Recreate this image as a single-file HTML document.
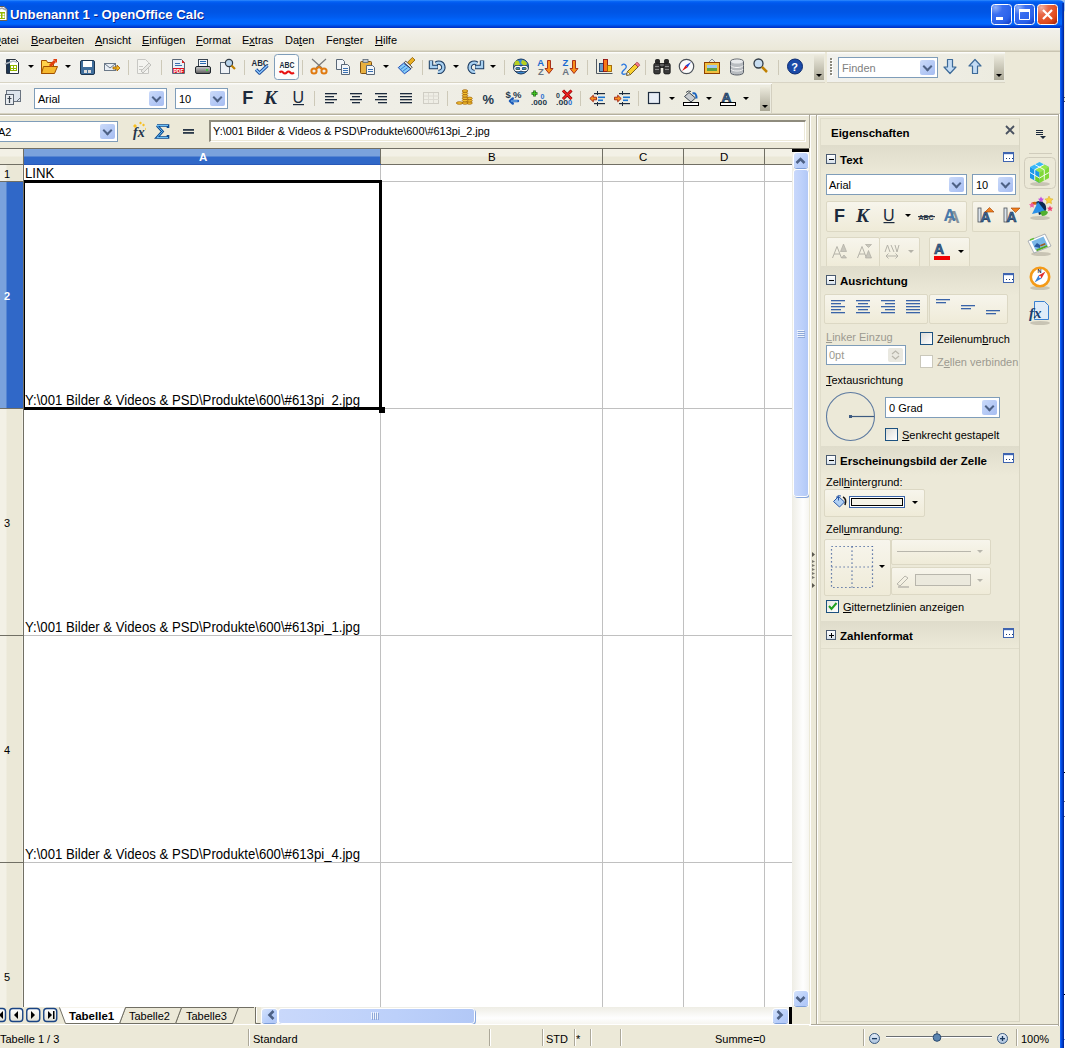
<!DOCTYPE html>
<html><head><meta charset="utf-8">
<style>
*{box-sizing:border-box;margin:0;padding:0}
html,body{width:1065px;height:1048px;overflow:hidden;background:#fdfdf6;font-family:"Liberation Sans",sans-serif;font-size:11px;color:#000}
.a{position:absolute}
.t{position:absolute;white-space:nowrap;line-height:1}
#win{position:absolute;left:0;top:0;width:1064px;height:1048px;background:#ece9d8;overflow:hidden}
#title{position:absolute;left:0;top:0;width:1064px;height:28px;
 background:linear-gradient(#3d95ff 0px,#0a6af7 1px,#0058ee 3px,#0054e3 6px,#0055e5 12px,#005cf0 17px,#0064fb 20px,#0066ff 24px,#0052e6 25.5px,#003ad0 27px,#0034c4 28px)}
#bord{position:absolute;left:1060px;top:27px;width:4px;height:1021px;background:linear-gradient(90deg,#166cff,#0048e0 40%,#0030b0 80%,#001a80)}
#menubar{position:absolute;left:0;top:28px;width:1060px;height:24px;background:linear-gradient(#fdfbee 0,#fdfbee 1px,#f1f0ea 2px,#ebe8d8 22px,#c9c5b2 23px,#c9c5b2 24px)}
.mi{position:absolute;top:34px;font-size:11px;color:#000}
u{text-decoration:underline;text-decoration-thickness:1px;text-underline-offset:1px}
.tb{position:absolute;background:linear-gradient(#fcfcfa 0,#fcfcfa 1px,rgba(252,252,250,0) 2px),linear-gradient(90deg,#f1f1ed,#efeee6 50%,#ecebdf 100%)}
.sep{position:absolute;width:1px;background:#c5c2b2}
.ovf{position:absolute;width:10px;background:linear-gradient(#ebe9dc,#a8a594)}
.ovf:after{content:"";position:absolute;left:2px;bottom:4px;border-left:3px solid transparent;border-right:3px solid transparent;border-top:3px solid #000}
.dd{position:absolute;width:0;height:0;border-left:3px solid transparent;border-right:3px solid transparent;border-top:3px solid #000}
.combo{position:absolute;background:#fff;border:1px solid #7f9db9}
.cbtn{position:absolute;right:2px;top:2px;bottom:2px;width:15px;background:linear-gradient(135deg,#cbdaf9,#b3c8f5 60%,#a7bdf1);border-radius:2px}
.cbtn:after{content:"";position:absolute;left:4px;top:2.5px;width:5px;height:5px;border-right:2.5px solid #4d6185;border-bottom:2.5px solid #4d6185;transform:rotate(45deg) ;transform-origin:50% 50%}
#grid{position:absolute;left:0;top:148px;width:809px;height:876px;background:#fff;overflow:hidden}
.hl{position:absolute;left:24px;width:768px;height:1px;background:#c0c0c0}
.vl{position:absolute;top:17px;width:1px;height:842px;background:#c0c0c0}
.ct{position:absolute;left:25px;font-size:14px;color:#000;white-space:nowrap;line-height:1;transform:scaleX(0.9405);transform-origin:0 0}
#side{position:absolute;left:810px;top:114px;width:250px;height:912px;background:#ece9d8}
.sh{position:absolute;left:11px;width:198px;background:linear-gradient(#dfdccb,#e9e6d6)}
.sht{position:absolute;font-weight:bold;font-size:12px}
.minus{position:absolute;width:10px;height:10px;border:1px solid #4a5a70;background:linear-gradient(#fff,#d6e0ea)}
.plus:before{content:"";position:absolute;left:4px;top:2px;width:1px;height:5px;background:#000}
.minus:after{content:"";position:absolute;left:2px;top:4px;width:5px;height:1px;background:#000}
.more{position:absolute;width:11px;height:10px;border:1px solid #3f64b0;background:#fff;border-top-width:2px;box-shadow:inset 0 1px 0 #d8e4f6}
.more:after{content:"";position:absolute;left:2px;top:4px;width:1px;height:1px;background:#1c3a70;box-shadow:3px 0 0 #1c3a70,6px 0 0 #1c3a70}
.box{position:absolute;border:1px solid #dcd8c4;border-radius:2px;background:linear-gradient(#f7f5ec,#efebd8)}
.sbtn{position:absolute;border-radius:3px;background:linear-gradient(135deg,#d4e2fc,#b9cffa 55%,#aec5f6);box-shadow:0 1px 0 #7d9ed8, 0 0 0 1px #fff}
.sthumb{position:absolute;border-radius:3px;background:linear-gradient(90deg,#c9d8fb,#bcd0fa 60%,#b2c8f6);box-shadow:0 0 0 1px #fff, 1px 1px 0 1px #8aa8dc}
.chk{position:absolute;width:13px;height:13px;border:1px solid #1c5180;background:linear-gradient(135deg,#dcdcd7,#fff)}
</style></head><body>
<div id="win">
<div id="title"></div>
<div class="t" style="left:10px;top:7.5px;color:#fff;font-weight:bold;font-size:13.2px;text-shadow:1px 1px 0 #0a1e8c">Unbenannt 1 - OpenOffice Calc</div>

<svg class="a" style="left:0;top:0" width="1064" height="28">
<path d="M-6 6.5h10l3 3v11h-13z" fill="#fff" stroke="#6a6050"/><rect x="-3" y="12" width="8" height="7" fill="#94b800"/><g fill="#fff"><rect x="-1" y="13.5" width="2" height="2"/><rect x="2.5" y="13.5" width="2" height="2"/><rect x="-1" y="16" width="2" height="2"/><rect x="2.5" y="16" width="2" height="2"/></g><path d="M-4 10l6-2 4 2" stroke="#a0a8b0" stroke-width="1.5" fill="none"/>
<defs><radialGradient id="gBtn" cx="0.2" cy="0.15" r="1"><stop offset="0" stop-color="#8fb0f8"/><stop offset="0.35" stop-color="#3a6ef0"/><stop offset="0.8" stop-color="#2a62ea"/><stop offset="1" stop-color="#1a48d0"/></radialGradient>
<radialGradient id="gCls" cx="0.2" cy="0.15" r="1"><stop offset="0" stop-color="#f0b0a0"/><stop offset="0.35" stop-color="#e86848"/><stop offset="0.8" stop-color="#e04a1a"/><stop offset="1" stop-color="#b83010"/></radialGradient></defs>
<rect x="991.5" y="4.5" width="20" height="20" rx="3" fill="url(#gBtn)" stroke="#fff"/><rect x="996" y="17" width="7" height="3" fill="#fff"/>
<rect x="1014.5" y="4.5" width="20" height="20" rx="3" fill="url(#gBtn)" stroke="#fff"/><path d="M1019.5 10.5h10v9h-10z" fill="none" stroke="#fff"/><rect x="1019" y="9" width="11" height="3" fill="#fff"/>
<rect x="1037.5" y="4.5" width="20" height="20" rx="3" fill="url(#gCls)" stroke="#fff"/><path d="M1043 10l9 9M1052 10l-9 9" stroke="#fff" stroke-width="2.2"/>
</svg>
<div id="menubar"></div>
<div class="mi" style="left:-7px"><u>D</u>atei</div>
<div class="mi" style="left:31px"><u>B</u>earbeiten</div>
<div class="mi" style="left:95px"><u>A</u>nsicht</div>
<div class="mi" style="left:142px"><u>E</u>infügen</div>
<div class="mi" style="left:196px"><u>F</u>ormat</div>
<div class="mi" style="left:242px">E<u>x</u>tras</div>
<div class="mi" style="left:285px">Da<u>t</u>en</div>
<div class="mi" style="left:326px">Fen<u>s</u>ter</div>
<div class="mi" style="left:375px"><u>H</u>ilfe</div>

<!-- toolbar row 1 -->
<div class="tb" style="left:0;top:52px;width:825px;height:31px;border-bottom:1px solid #d8d4c4"></div>
<div class="tb" style="left:827px;top:52px;width:178px;height:31px;border-bottom:1px solid #d8d4c4"></div>
<!-- toolbar row 2 -->
<div class="tb" style="left:0;top:83px;width:772px;height:31px;border-bottom:1px solid #d8d4c4"></div>

<svg class="a" style="left:0;top:0" width="1060" height="148" viewBox="0 0 1060 148">
<defs>
<linearGradient id="gOv" x1="0" y1="0" x2="0" y2="1"><stop offset="0" stop-color="#ebe9dc"/><stop offset="1" stop-color="#a9a694"/></linearGradient>
<linearGradient id="gBl" x1="0" y1="0" x2="0" y2="1"><stop offset="0" stop-color="#d6e4f7"/><stop offset="1" stop-color="#8fb3e0"/></linearGradient>
<linearGradient id="gGy" x1="0" y1="0" x2="0" y2="1"><stop offset="0" stop-color="#cfcfcf"/><stop offset="1" stop-color="#5a5a5a"/></linearGradient>
<linearGradient id="gYl" x1="0" y1="0" x2="0" y2="1"><stop offset="0" stop-color="#ffe89a"/><stop offset="1" stop-color="#f0b030"/></linearGradient>
</defs>
<!-- separators row1 -->
<g fill="#cdc9b8">
<rect x="128" y="60" width="1" height="15"/><rect x="161" y="60" width="1" height="15"/><rect x="244" y="60" width="1" height="15"/>
<rect x="302" y="60" width="1" height="15"/><rect x="422" y="60" width="1" height="15"/><rect x="504" y="60" width="1" height="15"/>
<rect x="587" y="60" width="1" height="15"/><rect x="645" y="60" width="1" height="15"/><rect x="778" y="60" width="1" height="15"/>
<!-- row2 -->
<rect x="314" y="91" width="1" height="15"/><rect x="447" y="91" width="1" height="15"/><rect x="580" y="91" width="1" height="15"/><rect x="638" y="91" width="1" height="15"/>
</g>
<!-- dropdown arrows -->
<g fill="#000">
<path d="M28 65h6l-3 3z"/><path d="M65 65h6l-3 3z"/><path d="M383 65h6l-3 3z"/><path d="M453 65h6l-3 3z"/><path d="M490 65h6l-3 3z"/>
<path d="M669 97h6l-3 3z"/><path d="M706 97h6l-3 3z"/><path d="M743 97h6l-3 3z"/>
</g>
<!-- overflow -->
<rect x="814" y="55" width="10" height="25" fill="url(#gOv)"/><path d="M816 74h6l-3 3z" fill="#000"/>
<rect x="994" y="55" width="10" height="25" fill="url(#gOv)"/><path d="M996 74h6l-3 3z" fill="#000"/>
<rect x="760" y="87" width="10" height="24" fill="url(#gOv)"/><path d="M762 105h6l-3 3z" fill="#000"/>
<!-- new calc -->
<path d="M6.5 59.5h9l3 3v11h-12z" fill="#fff" stroke="#2a3340"/><rect x="7" y="60" width="3" height="13" fill="#1d3550"/>
<rect x="10" y="65" width="7" height="6" fill="#94b800"/><g fill="#fff"><rect x="11" y="66" width="2" height="2"/><rect x="14" y="66" width="2" height="2"/><rect x="11" y="69" width="2" height="1"/><rect x="14" y="69" width="2" height="1"/></g>
<path d="M5 64l8-3 4 1" stroke="#b0b8c0" fill="none" stroke-width="1.5"/>
<!-- open folder -->
<path d="M41.5 60.5h5l1 2h6v11h-12z" fill="#ffd24a" stroke="#a05000"/><path d="M43.5 66.5h14l-3 7h-13z" fill="#f5b82e" stroke="#a05000"/>
<path d="M50 66l5-5" stroke="#e04010" stroke-width="3"/><path d="M53 59h4v4z" fill="#e04010"/>
<!-- save -->
<rect x="80.5" y="60.5" width="14" height="14" rx="1.5" fill="#3f6e9c" stroke="#1b3550"/><rect x="83" y="61" width="9" height="6" fill="#fff"/><rect x="84" y="70" width="3" height="3" fill="#ddd"/><rect x="88" y="70" width="3" height="3" fill="#ddd"/>
<!-- email -->
<rect x="104.5" y="63.5" width="11" height="7" fill="#e8eef5" stroke="#6a7888"/><path d="M105 64l5 4 5-4" stroke="#6a7888" fill="none"/><path d="M113 67h4v-2l3 3-3 3v-2h-4z" fill="#f5b820" stroke="#a06000" stroke-width="0.8"/>
<!-- edit disabled -->
<path d="M137.5 59.5h8l3 3v11h-11z" fill="#f4f4f0" stroke="#c8c8c4"/><path d="M141 71l8-8 2 2-8 8z" fill="#e8e8e4" stroke="#c0c0bc"/><g fill="#c8c8c4"><rect x="139" y="66" width="4" height="1"/><rect x="139" y="69" width="3" height="1"/></g>
<!-- pdf -->
<path d="M172.5 59.5h9l3 3v11h-12z" fill="#eaf0f6" stroke="#5a6878"/><path d="M182 60l3 3h-3z" fill="#e02020"/><rect x="175" y="63" width="5" height="1" fill="#3a70b0"/><rect x="175" y="65" width="7" height="1" fill="#3a70b0"/><rect x="173" y="68" width="11" height="5" fill="#e01020"/><text x="173.5" y="72.6" font-size="5" font-weight="bold" fill="#fff" font-family="Liberation Sans">PDF</text>
<!-- printer -->
<rect x="198.5" y="59.5" width="9" height="7" fill="#f4f6f8" stroke="#3a4450"/><rect x="200" y="61" width="6" height="1" fill="#2a6ab0"/><rect x="200" y="63" width="6" height="1" fill="#2a6ab0"/>
<rect x="195.5" y="66.5" width="15" height="7" rx="1.5" fill="url(#gGy)" stroke="#20262c"/><rect x="206" y="69" width="2" height="2" fill="#40d040"/>
<!-- preview -->
<rect x="220.5" y="62.5" width="9" height="11" fill="#eef2f6" stroke="#5a6878"/><circle cx="229" cy="63" r="3.6" fill="#b8d4ec" stroke="#303a44" stroke-width="1.2"/><path d="M231.5 65.5l3.5 3.5" stroke="#c08000" stroke-width="2.2"/>
<!-- spellcheck -->
<text x="251.5" y="65.5" font-size="9.5" font-weight="bold" fill="#1a2a3a" font-family="Liberation Sans" textLength="17" lengthAdjust="spacingAndGlyphs">ABC</text><path d="M256 69.5l3.5 3.5 8-7.5" stroke="#1a4a98" stroke-width="3.2" fill="none" stroke-linejoin="round"/><path d="M256 69.5l3.5 3.5 8-7.5" stroke="#8cc8ff" stroke-width="1.4" fill="none"/>
<!-- autospell active -->
<rect x="274.5" y="54.5" width="24" height="25" rx="3" fill="#fcfcfb" stroke="#7f9db9"/>
<text x="279.5" y="68.3" font-size="9.5" font-weight="bold" fill="#1a2a3a" font-family="Liberation Sans" textLength="15" lengthAdjust="spacingAndGlyphs">ABC</text><path d="M279.5 72.5q1.8-2.2 3.6 0t3.6 0t3.6 0t3.6 0" stroke="#e81010" stroke-width="2" fill="none"/>
<!-- scissors -->
<path d="M312 59l10 9M326 59l-10 9" stroke="#7a7a7a" stroke-width="1.2"/><circle cx="314" cy="71" r="2.6" fill="none" stroke="#e07a10" stroke-width="2"/><circle cx="324" cy="71" r="2.6" fill="none" stroke="#e07a10" stroke-width="2"/><path d="M316 69l3-2 3 2" stroke="#e07a10" stroke-width="2" fill="none"/>
<!-- copy -->
<path d="M336.5 59.5h6l2 2v8h-8z" fill="#f2f5f8" stroke="#5a6878"/><path d="M341.5 64.5h6l2 2v8h-8z" fill="#f2f5f8" stroke="#5a6878"/><g fill="#3a70b0"><rect x="343" y="68" width="5" height="1"/><rect x="343" y="70" width="5" height="1"/><rect x="343" y="72" width="5" height="1"/></g>
<!-- paste -->
<rect x="360.5" y="61.5" width="11" height="12" rx="1" fill="#e8b040" stroke="#805010"/><rect x="363" y="59.5" width="5" height="3" fill="#c0c8d0" stroke="#5a6878" stroke-width="0.8"/><path d="M366.5 65.5h6l2 2v7h-8z" fill="#f2f5f8" stroke="#5a6878"/><g fill="#3a70b0"><rect x="368" y="69" width="5" height="1"/><rect x="368" y="71" width="5" height="1"/></g>
<!-- brush -->
<path d="M398.3 67.6L403.6 63.2L411 68.8L404.4 73.8z" fill="#86ccf4" stroke="#1a48b8" stroke-width="1" stroke-linejoin="round"/><path d="M400.5 69.5l5-3.8M402.5 71.5l5-3.8" stroke="#2a70d0" stroke-width="0.9"/>
<path d="M404.2 62.6L405.8 61.2L412.2 67.2L410.8 68.6z" fill="#eef2f6" stroke="#222" stroke-width="0.8"/>
<path d="M407.6 62.2L412.4 57.4L415 60L410.2 64.8z" fill="#eab024" stroke="#8a5a00" stroke-width="0.8"/>
<!-- undo -->
<g id="undoI">
<path d="M436 63.6A4.6 4.6 0 1 1 438 71.8" stroke="#1a3a60" stroke-width="4.4" fill="none"/>
<path d="M431 60.5V67H438" stroke="#1a3a60" stroke-width="4.4" fill="none" stroke-linejoin="miter"/>
<path d="M436 63.6A4.6 4.6 0 1 1 438 71.8" stroke="#a8d0f0" stroke-width="2.4" fill="none"/>
<path d="M431 61V67H437.5" stroke="#a8d0f0" stroke-width="2.4" fill="none"/>
</g>
<use href="#undoI" transform="translate(913 0) scale(-1 1)"/>
<!-- globe -->
<circle cx="521" cy="66.5" r="7.5" fill="#3a88d0" stroke="#1a3a60"/><path d="M515 61.5q2-2 4 0l1 3-3 2-3-1zM522 60q3 0 5 3l-1 3-3-1-2-2z" fill="#b8d020"/><path d="M516 68l2 3 2-1M524 69l2-1 1 2-2 2z" fill="#78a818"/>
<rect x="514.8" y="66.3" width="6.2" height="4.4" rx="2.2" fill="none" stroke="#1a3050" stroke-width="2.4"/><rect x="521" y="66.3" width="6.2" height="4.4" rx="2.2" fill="none" stroke="#1a3050" stroke-width="2.4"/>
<rect x="514.8" y="66.3" width="6.2" height="4.4" rx="2.2" fill="none" stroke="#fff" stroke-width="1.2"/><rect x="521" y="66.3" width="6.2" height="4.4" rx="2.2" fill="none" stroke="#fff" stroke-width="1.2"/>
<!-- sort AZ -->
<text x="537.3" y="66" font-size="9.5" font-weight="bold" fill="#1a6ad0" font-family="Liberation Sans">A</text><text x="538" y="74.6" font-size="9.5" font-weight="bold" fill="#6a7480" font-family="Liberation Sans">Z</text>
<path d="M547.5 60.5h3v8h2.5l-4 5-4-5h2.5z" fill="#f8901c" stroke="#a02010" stroke-width="0.9" stroke-linejoin="round"/>
<text x="562.5" y="66" font-size="9.5" font-weight="bold" fill="#1a6ad0" font-family="Liberation Sans">Z</text><text x="562.3" y="74.6" font-size="9.5" font-weight="bold" fill="#6a7480" font-family="Liberation Sans">A</text>
<path d="M572.5 60.5h3v8h2.5l-4 5-4-5h2.5z" fill="#f8901c" stroke="#a02010" stroke-width="0.9" stroke-linejoin="round"/>
<!-- chart -->
<path d="M596.5 59v14.5h16" stroke="#505860" fill="none"/><rect x="599.5" y="63.5" width="4" height="8" fill="#6a9ac8" stroke="#1a3a60" stroke-width="0.9"/><rect x="603.5" y="59.5" width="4" height="12" fill="#f87818" stroke="#901010" stroke-width="0.9"/><rect x="607.5" y="65.5" width="4" height="6" fill="#f8c820" stroke="#a06000" stroke-width="0.9"/>
<!-- draw -->
<path d="M621.5 65.5q2-2.5 4-0.5t-1 4.5-2.5 4q1.5 1.5 5 0" stroke="#2a78e0" fill="none" stroke-width="1.3"/>
<path d="M627.5 71.5l7.5-7.5 3 3-7.5 7.5-3.8 0.8z" fill="#f8d030" stroke="#5a4000" stroke-width="0.8" stroke-linejoin="round"/>
<path d="M627.5 71.5l3 3-3.8 0.8z" fill="#fff" stroke="#5a4000" stroke-width="0.6"/>
<path d="M635 64l1.8-1.8q1.5 0 3 3l-1.8 1.8z" fill="#f07888" stroke="#a03040" stroke-width="0.6"/>
<!-- binoculars -->
<rect x="655.5" y="59.5" width="4" height="4" rx="1" fill="#2a2a2a" stroke="#111" stroke-width="0.8"/><rect x="664.5" y="59.5" width="4" height="4" rx="1" fill="#2a2a2a" stroke="#111" stroke-width="0.8"/>
<rect x="659" y="63.5" width="6" height="4" fill="#3a3a3a" stroke="#111" stroke-width="0.8"/>
<rect x="653.8" y="63.3" width="6.4" height="10.6" rx="1.6" fill="#3a3a3a" stroke="#111" stroke-width="0.8"/><rect x="663.8" y="63.3" width="6.4" height="10.6" rx="1.6" fill="#3a3a3a" stroke="#111" stroke-width="0.8"/>
<g fill="#8a8a8a"><rect x="655" y="66" width="4" height="1"/><rect x="665" y="66" width="4" height="1"/><rect x="655" y="69" width="4" height="1"/><rect x="665" y="69" width="4" height="1"/><rect x="660" y="64.5" width="4" height="1"/></g>
<!-- navigator -->
<circle cx="686.5" cy="66.5" r="7.2" fill="#fbfbfb" stroke="#4a5058" stroke-width="1.2"/><path d="M691 62l-3.5 5.5-2-2z" fill="#2040d0"/><path d="M682 71l3.5-5.5 2 2z" fill="#e01010"/>
<!-- gallery -->
<rect x="704.5" y="62.5" width="15" height="11" fill="#f0c040" stroke="#904000"/><rect x="707" y="65" width="10" height="6" fill="#60a040"/><rect x="707" y="65" width="10" height="3" fill="#a0c8f0"/><path d="M709 62l3-3 3 3" stroke="#6a7480" fill="none" stroke-width="0.8"/>
<!-- database -->
<path d="M730.5 61.5a6.5 2.5 0 0 1 13 0v11a6.5 2.5 0 0 1 -13 0z" fill="#b8bcc0" stroke="#5a6068"/><ellipse cx="737" cy="61.5" rx="6" ry="2" fill="#e8eaec"/><path d="M731 65.5a6 2 0 0 0 12 0M731 69a6 2 0 0 0 12 0" stroke="#f4f4f4" fill="none"/>
<!-- zoom -->
<circle cx="758.5" cy="63.5" r="4.5" fill="#c8ddf0" stroke="#303a44" stroke-width="1.3"/><path d="M762 67l5 5" stroke="#c08000" stroke-width="2.5"/>
<!-- help -->
<circle cx="795" cy="66.5" r="7.5" fill="#1a4aa8" stroke="#0a2a70"/><text x="791.3" y="70.8" font-size="11" font-weight="bold" fill="#fff" font-family="Liberation Sans">?</text>
<!-- find toolbar -->
<g fill="#fff"><rect x="831" y="59" width="2" height="2"/><rect x="831" y="62" width="2" height="2"/><rect x="831" y="65" width="2" height="2"/><rect x="831" y="68" width="2" height="2"/><rect x="831" y="71" width="2" height="2"/><rect x="831" y="74" width="2" height="2"/></g>
<g fill="#8a887c"><rect x="830" y="58" width="2" height="2"/><rect x="830" y="61" width="2" height="2"/><rect x="830" y="64" width="2" height="2"/><rect x="830" y="67" width="2" height="2"/><rect x="830" y="70" width="2" height="2"/><rect x="830" y="73" width="2" height="2"/></g>
<path d="M947.5 59.5h5v7.5h3.5l-6 6.5-6-6.5h3.5z" fill="#c4dcf4" stroke="#3d6a98" stroke-width="1.2" stroke-linejoin="round"/>
<path d="M972.5 73.5h5v-7.5h3.5l-6-6.5-6 6.5h3.5z" fill="#c4dcf4" stroke="#3d6a98" stroke-width="1.2" stroke-linejoin="round"/>
<!-- row 2: styles icon -->
<rect x="6.5" y="90.5" width="14" height="11" fill="#dde4ec" stroke="#6a7480"/><path d="M17 101l3-3" stroke="#6a7480" fill="#fff"/><rect x="5.5" y="94.5" width="8" height="10" fill="#e8ecf0" stroke="#5a6470"/><path d="M9.5 96v7M7.5 98.5h4" stroke="#3a4450" stroke-width="1.2"/>
<!-- F K U -->
<text x="242.3" y="104" font-size="18" font-weight="bold" fill="#1c2a3c" font-family="Liberation Sans">F</text>
<text x="264" y="104" font-size="19.5" font-weight="bold" font-style="italic" fill="#1c2a3c" font-family="Liberation Serif">K</text>
<text x="292.5" y="102.6" font-size="16" fill="#1c2a3c" font-family="Liberation Sans">U</text><rect x="293" y="104" width="11" height="1.2" fill="#1c2a3c"/>
<!-- align -->
<g fill="#1c2a3c">
<rect x="325" y="93" width="12" height="1.3"/><rect x="325" y="96" width="9" height="1.3"/><rect x="325" y="99" width="12" height="1.3"/><rect x="325" y="102" width="9" height="1.3"/>
<rect x="350" y="93" width="12" height="1.3"/><rect x="352" y="96" width="8" height="1.3"/><rect x="350" y="99" width="12" height="1.3"/><rect x="352" y="102" width="8" height="1.3"/>
<rect x="375" y="93" width="12" height="1.3"/><rect x="378" y="96" width="9" height="1.3"/><rect x="375" y="99" width="12" height="1.3"/><rect x="378" y="102" width="9" height="1.3"/>
<rect x="400" y="93" width="12" height="1.3"/><rect x="400" y="96" width="12" height="1.3"/><rect x="400" y="99" width="12" height="1.3"/><rect x="400" y="102" width="12" height="1.3"/>
</g>
<!-- merge disabled -->
<rect x="423.5" y="92.5" width="15" height="11" fill="none" stroke="#cfcdc4"/><path d="M424 96h15M424 99.5h15M428.5 93v10M433.5 93v10" stroke="#dcdad2"/>
<!-- coins -->
<g fill="#f4c030" stroke="#9a5a00" stroke-width="0.7">
<ellipse cx="459.5" cy="103" rx="3.2" ry="1.3"/>
<ellipse cx="469.5" cy="103" rx="2.8" ry="1.3"/><ellipse cx="469.5" cy="100.7" rx="2.8" ry="1.3"/><ellipse cx="469.5" cy="98.4" rx="2.8" ry="1.3"/>
<ellipse cx="465" cy="103" rx="2.8" ry="1.3"/><ellipse cx="465" cy="100.6" rx="2.8" ry="1.3"/><ellipse cx="465" cy="98.2" rx="2.8" ry="1.3"/><ellipse cx="465" cy="95.8" rx="2.8" ry="1.3"/><ellipse cx="465" cy="93.4" rx="2.8" ry="1.3"/><ellipse cx="465" cy="91" rx="2.8" ry="1.3"/>
</g>
<!-- % -->
<text x="482.5" y="103.5" font-size="13" font-weight="bold" fill="#24384c" font-family="Liberation Sans" textLength="11.5" lengthAdjust="spacingAndGlyphs">%</text>
<!-- $% -->
<text x="505.5" y="97.5" font-size="9.5" font-weight="bold" fill="#24384c" font-family="Liberation Sans">$</text><text x="513" y="97.5" font-size="9.5" font-weight="bold" fill="#24384c" font-family="Liberation Sans">%</text>
<path d="M510 101h8M510 101l2.8-2.6M510 101l2.8 2.6" stroke="#1d5bb8" stroke-width="2.4" fill="none" stroke-linecap="round"/><path d="M511 101h6.5" stroke="#9ad0f8" stroke-width="0.9"/>
<!-- +0 .000 -->
<path d="M534.5 90.5v6M531.5 93.5h6" stroke="#1a6a10" stroke-width="2.6"/><path d="M534.5 91v5M532 93.5h5" stroke="#40c020" stroke-width="1.2"/>
<text x="540.5" y="98.5" font-size="7" font-weight="bold" fill="#2a70d0" font-family="Liberation Sans">0</text>
<text x="531" y="104.6" font-size="7.5" font-weight="bold" fill="#24384c" font-family="Liberation Sans" textLength="16" lengthAdjust="spacingAndGlyphs">.000</text>
<!-- 0x .000 -->
<text x="556" y="97.5" font-size="7" font-weight="bold" fill="#24384c" font-family="Liberation Sans">0</text>
<path d="M563 90.5l8.5 8.5M571.5 90.5l-8.5 8.5" stroke="#8a0000" stroke-width="3"/><path d="M563 90.5l8.5 8.5M571.5 90.5l-8.5 8.5" stroke="#f02020" stroke-width="1.6"/>
<text x="556" y="104.6" font-size="7.5" font-weight="bold" fill="#24384c" font-family="Liberation Sans" textLength="12" lengthAdjust="spacingAndGlyphs">.00</text><text x="568" y="104.6" font-size="7.5" font-weight="bold" fill="#2a70d0" font-family="Liberation Sans">0</text>
<!-- indent -->
<g fill="#1c2a3c"><rect x="594" y="93" width="11" height="1.2"/><rect x="594" y="103" width="11" height="1.2"/><rect x="597" y="91" width="1" height="4"/><rect x="597" y="102" width="1" height="4"/></g>
<g fill="#1a74d0"><rect x="598" y="96.5" width="7" height="1.6"/><rect x="598" y="99.5" width="5" height="1.6"/></g>
<path d="M589.8 98.5l3.5-3.3v2h3.2v2.6h-3.2v2z" fill="#f89020" stroke="#a02010" stroke-width="0.9" stroke-linejoin="round"/>
<g fill="#1c2a3c"><rect x="619" y="93" width="11" height="1.2"/><rect x="619" y="103" width="11" height="1.2"/><rect x="622" y="91" width="1" height="4"/><rect x="622" y="102" width="1" height="4"/></g>
<g fill="#1a74d0"><rect x="623" y="96.5" width="7" height="1.6"/><rect x="623" y="99.5" width="5" height="1.6"/></g>
<path d="M621.2 98.5l-3.5-3.3v2h-3.2v2.6h3.2v2z" fill="#f89020" stroke="#a02010" stroke-width="0.9" stroke-linejoin="round"/>
<!-- border box -->
<rect x="648.5" y="92.5" width="11" height="11" fill="#e8eef6" stroke="#1c2a3c" stroke-width="1.2"/>
<!-- bucket -->
<path d="M684.5 96.5l4.5-4 6.5 5.5-4.5 4z" fill="#c8ccd0" stroke="#2a3440" stroke-width="0.9"/><path d="M686 92.5q2-2.5 5-1" stroke="#2a3440" fill="none" stroke-width="0.9"/><path d="M692.5 93.5q4-1.5 4 5" stroke="#1a64c0" stroke-width="2" fill="none"/><rect x="683.5" y="102.5" width="15" height="3" fill="#fff" stroke="#000"/>
<!-- font color -->
<text x="721.5" y="101.5" font-size="13.5" font-weight="bold" fill="#3a6a9a" stroke="#1a3050" stroke-width="0.7" font-family="Liberation Sans">A</text><rect x="720.5" y="102.5" width="15" height="3" fill="#fff" stroke="#000"/>
<!-- formula bar icons -->
<text x="133" y="137" font-size="14" font-style="italic" font-weight="bold" fill="#24354a" font-family="Liberation Serif">fx</text>
<g fill="#f8c020"><path d="M133 126l2-2 2 2-2 2z"/><path d="M139 123l1.5-1.5 1.5 1.5-1.5 1.5z"/><path d="M142 125l1.5-1.5 1.5 1.5-1.5 1.5z"/><path d="M145 129l1-1.5v3z"/></g>
<path d="M157 125.5h11v2.5M157 125.5l5.5 6-5.5 6h11v-2.5" stroke="#0a4a90" stroke-width="2.6" fill="none" stroke-linejoin="miter"/><path d="M157 125.5h11M157 125.5l5.5 6-5.5 6h11" stroke="#6ac0f8" stroke-width="1" fill="none"/>
<rect x="183" y="129" width="11" height="1.8" fill="#2a3848"/><rect x="183" y="132" width="11" height="1.8" fill="#2a3848"/>
</svg>

<div class="combo" style="left:34px;top:88px;width:133px;height:21px"><div class="cbtn"></div></div>
<div class="t" style="left:38px;top:94px;font-size:11px">Arial</div>
<div class="combo" style="left:175px;top:88px;width:53px;height:21px"><div class="cbtn"></div></div>
<div class="t" style="left:179px;top:94px;font-size:11px">10</div>
<div class="combo" style="left:838px;top:57px;width:100px;height:21px"><div class="cbtn"></div></div>
<div class="t" style="left:842px;top:63px;font-size:11px;color:#808080">Finden</div>
<!-- formula bar -->
<div class="a" style="left:0;top:113px;width:1060px;height:1px;background:#d6d2c2"></div><div class="a" style="left:0;top:114px;width:1060px;height:1px;background:#b4b09e"></div><div class="a" style="left:0;top:115px;width:810px;height:1px;background:#fff"></div><div class="a" style="left:771px;top:84px;width:1px;height:29px;background:#d4d0c0"></div>
<div class="combo" style="left:-2px;top:121px;width:120px;height:21px"><div class="cbtn"></div></div>
<div class="t" style="left:-2px;top:127px;font-size:11px">A2</div>
<div class="a" style="left:209px;top:120px;width:597px;height:22px;background:#fff;border-top:2px solid #8e8b7d;border-left:2px solid #8e8b7d;border-right:1px solid #fff;border-bottom:1px solid #fff;box-shadow:inset -1px -1px 0 #ece9d8"></div>
<div class="t" style="left:213px;top:126px;font-size:11px;transform:scaleX(0.989);transform-origin:0 0">Y:\001 Bilder &amp; Videos &amp; PSD\Produkte\600\#613pi_2.jpg</div>

<!-- grid -->
<div id="grid">
  <!-- header row -->
  <div class="a" style="left:0;top:0;width:809px;height:1px;background:#716f64"></div>
  <div class="a" style="left:0;top:1px;width:792px;height:16px;background:linear-gradient(#f3f1e6 0,#f3f1e6 7px,#ebe8d7 8px,#ebe8d7 15px,#716f64 15px)"></div>
  <div class="a" style="left:24px;top:1px;width:357px;height:16px;background:linear-gradient(#7aa2dc 0,#7aa2dc 7px,#3068c8 8px,#3068c8 15px,#2858b8 15px)"></div>
  <div class="t" style="left:199px;top:4px;color:#fff;font-weight:bold;font-size:11.5px">A</div>
  <div class="t" style="left:488px;top:4px;font-size:11.5px">B</div>
  <div class="t" style="left:639px;top:4px;font-size:11.5px">C</div>
  <div class="t" style="left:720px;top:4px;font-size:11.5px">D</div>
  <div class="a" style="left:23px;top:1px;width:1px;height:15px;background:#716f64"></div>
  <div class="a" style="left:380px;top:1px;width:1px;height:15px;background:#716f64"></div>
  <div class="a" style="left:602px;top:1px;width:1px;height:15px;background:#716f64"></div>
  <div class="a" style="left:683px;top:1px;width:1px;height:15px;background:#716f64"></div>
  <div class="a" style="left:764px;top:1px;width:1px;height:15px;background:#716f64"></div>
  <!-- row headers -->
  <div class="a" style="left:0;top:17px;width:23px;height:842px;background:linear-gradient(90deg,#f3f1e6 0,#f3f1e6 6px,#ebe8d7 7px,#ebe8d7 22px,#f1efe4 22px)"></div>
  <div class="a" style="left:0;top:34px;width:23px;height:226px;background:linear-gradient(90deg,#7aa2dc 0,#7aa2dc 6px,#3068c8 7px)"></div>
  <div class="a" style="left:23px;top:17px;width:1px;height:842px;background:#716f64"></div>
  <div class="a" style="left:0;top:33px;width:23px;height:1px;background:#716f64"></div>
  <div class="a" style="left:0;top:260px;width:23px;height:1px;background:#716f64"></div>
  <div class="a" style="left:0;top:487px;width:23px;height:1px;background:#716f64"></div>
  <div class="a" style="left:0;top:714px;width:23px;height:1px;background:#716f64"></div>
  <div class="t" style="left:4px;top:21px">1</div>
  <div class="t" style="left:4px;top:143px;color:#fff;font-weight:bold">2</div>
  <div class="t" style="left:4px;top:370px">3</div>
  <div class="t" style="left:4px;top:597px">4</div>
  <div class="t" style="left:4px;top:824px">5</div>
  <!-- grid lines -->
  <div class="hl" style="top:33px"></div>
  <div class="hl" style="top:260px"></div>
  <div class="hl" style="top:487px"></div>
  <div class="hl" style="top:714px"></div>
  <div class="vl" style="left:380px"></div>
  <div class="vl" style="left:602px"></div>
  <div class="vl" style="left:683px"></div>
  <div class="vl" style="left:764px"></div>
  <!-- cell text -->
  <div class="ct" style="top:18px">LINK</div>
  <div class="ct" style="top:245px">Y:\001 Bilder &amp; Videos &amp; PSD\Produkte\600\#613pi_2.jpg</div>
  <div class="ct" style="top:472px">Y:\001 Bilder &amp; Videos &amp; PSD\Produkte\600\#613pi_1.jpg</div>
  <div class="ct" style="top:699px">Y:\001 Bilder &amp; Videos &amp; PSD\Produkte\600\#613pi_4.jpg</div>
  <!-- selection -->
  <div class="a" style="left:24px;top:32px;width:358px;height:230px;border:3px solid #000;border-left-width:1px"></div>
  <div class="a" style="left:379px;top:259px;width:6px;height:6px;background:#000"></div>
  <!-- v scrollbar -->
  <div class="a" style="left:792px;top:1px;width:17px;height:858px;background:linear-gradient(90deg,#eeede5,#fefefe 65%,#f6f5f0)"></div>
  <div class="a" style="left:792px;top:1px;width:17px;height:3px;background:#000"></div>
  <div class="sbtn" style="left:794px;top:5px;width:14px;height:15px"></div>
  <div class="sthumb" style="left:794px;top:22px;width:14px;height:326px"></div>
  <div class="sbtn" style="left:794px;top:843px;width:14px;height:15px"></div>
  <svg class="a" style="left:792px;top:1px" width="17" height="860">
   <path d="M4.5 14l4-4 4 4" stroke="#4d6185" stroke-width="2.6" fill="none"/>
   <path d="M4.5 848l4 4 4-4" stroke="#4d6185" stroke-width="2.6" fill="none"/>
   <g fill="#eef3fd"><rect x="5" y="181" width="7" height="1"/><rect x="5" y="183" width="7" height="1"/><rect x="5" y="185" width="7" height="1"/><rect x="5" y="187" width="7" height="1"/></g>
   <g fill="#8ea8d8"><rect x="6" y="182" width="7" height="1"/><rect x="6" y="184" width="7" height="1"/><rect x="6" y="186" width="7" height="1"/><rect x="6" y="188" width="7" height="1"/></g>
  </svg>
  <!-- tab bar area -->
  <div class="a" style="left:0;top:859px;width:809px;height:17px;background:#ece9d8"></div>
  <div class="a" style="left:261px;top:859px;width:528px;height:17px;background:linear-gradient(#eeede5,#fefefe 65%,#f6f5f0)"></div>
  <div class="sbtn" style="left:262px;top:861px;width:15px;height:14px"></div>
  <div class="sthumb" style="left:279px;top:861px;width:195px;height:14px"></div>
  <div class="sbtn" style="left:773px;top:861px;width:15px;height:14px"></div>
  <div class="a" style="left:789px;top:859px;width:3px;height:17px;background:#000"></div>
  <svg class="a" style="left:0;top:859px" width="809" height="17">
   <path d="M273.5 4l-4 4 4 4" stroke="#4d6185" stroke-width="2.6" fill="none"/>
   <path d="M777.5 4l4 4-4 4" stroke="#4d6185" stroke-width="2.6" fill="none"/>
   <g fill="#eef3fd"><rect x="371" y="5" width="1" height="7"/><rect x="373" y="5" width="1" height="7"/><rect x="375" y="5" width="1" height="7"/><rect x="377" y="5" width="1" height="7"/></g>
   <g fill="#8ea8d8"><rect x="372" y="6" width="1" height="7"/><rect x="374" y="6" width="1" height="7"/><rect x="376" y="6" width="1" height="7"/><rect x="378" y="6" width="1" height="7"/></g>
   <!-- nav buttons -->
   <g fill="url(#gNav)" stroke="#1a4484" stroke-width="1.4"><rect x="-7.5" y="1.5" width="13" height="13" rx="3"/><rect x="9.75" y="1.5" width="13" height="13" rx="3"/><rect x="26.75" y="1.5" width="13" height="13" rx="3"/><rect x="43.75" y="1.5" width="13" height="13" rx="3"/></g>
   <defs><linearGradient id="gNav" x1="0" y1="0" x2="0" y2="1"><stop offset="0" stop-color="#fff"/><stop offset="1" stop-color="#e4e2d6"/></linearGradient></defs>
   <path d="M3 4v8l-4-4z" fill="#000"/>
   <path d="M18 4v8l-4-4z" fill="#000"/>
   <path d="M31 4v8l4-4z" fill="#000"/>
   <path d="M48 4v8l4-4z" fill="#000"/><rect x="53" y="4" width="1.5" height="8" fill="#000"/>
   <!-- tabs -->
   <path d="M238.5 0.5H254.5V16.5" fill="none" stroke="#716f64"/>
   <rect x="254" y="0" width="7" height="17" fill="#ece9d8"/><path d="M255.5 0v16.5h5" stroke="#716f64" fill="none"/><path d="M256.5 1v14" stroke="#fff"/>
   <path d="M175.5 16.5L181.5 0.5H238.5L232.5 16.5z" fill="#ece9d8" stroke="#716f64"/>
   <path d="M119.5 16.5L125.5 0.5H181.5L175.5 16.5z" fill="#ece9d8" stroke="#716f64"/>
   <path d="M59.5 0.5L65.5 16.5H119.5L125.5 0.5" fill="#fff" stroke="#716f64"/>
   
  </svg>
  <div class="t" style="left:69px;top:863px;font-weight:bold;font-size:11.5px">Tabelle1</div>
  <div class="t" style="left:129px;top:863px;font-size:11px">Tabelle2</div>
  <div class="t" style="left:186px;top:863px;font-size:11px">Tabelle3</div>
</div>

<!-- status bar -->
<div class="a" style="left:0;top:1024px;width:1060px;height:1px;background:#fff"></div>
<svg class="a" style="left:0;top:1024px" width="1060" height="24">
<g fill="#aca899"><rect x="248" y="5" width="1" height="17"/><rect x="489" y="5" width="1" height="17"/><rect x="542" y="5" width="1" height="17"/><rect x="574" y="5" width="1" height="17"/><rect x="590" y="5" width="1" height="17"/><rect x="620" y="5" width="1" height="17"/><rect x="863" y="5" width="1" height="17"/><rect x="1016" y="5" width="1" height="17"/></g>
<g fill="#fff"><rect x="249" y="5" width="1" height="17"/><rect x="490" y="5" width="1" height="17"/><rect x="543" y="5" width="1" height="17"/><rect x="575" y="5" width="1" height="17"/><rect x="591" y="5" width="1" height="17"/><rect x="621" y="5" width="1" height="17"/><rect x="864" y="5" width="1" height="17"/><rect x="1017" y="5" width="1" height="17"/></g>
<defs><linearGradient id="gZm" x1="0" y1="0" x2="0" y2="1"><stop offset="0" stop-color="#e8f0fa"/><stop offset="1" stop-color="#a8c0dc"/></linearGradient></defs>
<circle cx="874.5" cy="14.5" r="5" fill="url(#gZm)" stroke="#3a5a80"/><rect x="872" y="14" width="5" height="1.3" fill="#1a3a60"/>
<rect x="886" y="12" width="106" height="1" fill="#6a6e72"/><rect x="886" y="13" width="106" height="1" fill="#fff"/>
<circle cx="1002.5" cy="14.5" r="5" fill="url(#gZm)" stroke="#3a5a80"/><rect x="1000" y="14" width="5" height="1.3" fill="#1a3a60"/><rect x="1001.85" y="12" width="1.3" height="5" fill="#1a3a60"/>
<rect x="936.5" y="7" width="1" height="4" fill="#4a5058"/><circle cx="937" cy="13.5" r="3.8" fill="#5a84b0" stroke="#2a4a70"/>
</svg>
<div class="t" style="left:0;top:1034px">Tabelle 1 / 3</div>
<div class="t" style="left:253px;top:1034px">Standard</div>
<div class="t" style="left:546px;top:1034px">STD</div>
<div class="t" style="left:576px;top:1034px">*</div>
<div class="t" style="left:715px;top:1034px">Summe=0</div>
<div class="t" style="left:1021px;top:1034px">100%</div>

<!-- ===== sidebar ===== -->
<div class="a" style="left:809px;top:114px;width:1px;height:34px;background:#aca899"></div>
<div class="a" style="left:810px;top:114px;width:1px;height:34px;background:#fff"></div>
<div class="a" style="left:809px;top:114px;width:251px;height:1px;background:#aca899"></div>
<div class="a" style="left:810px;top:115px;width:250px;height:1px;background:#fff"></div>
<div class="a" style="left:816px;top:115px;width:1px;height:910px;background:#aca899"></div>
<div class="a" style="left:817px;top:115px;width:1px;height:910px;background:#fff"></div>
<div class="a" style="left:811px;top:1024px;width:249px;height:1px;background:#aca899"></div><div class="a" style="left:810px;top:148px;width:1px;height:877px;background:#fff"></div>
<div class="a" style="left:809px;top:1025px;width:251px;height:1px;background:#fff"></div>
<div class="a" style="left:1058px;top:114px;width:1px;height:912px;background:#aca899"></div>
<div class="a" style="left:1059px;top:114px;width:1px;height:912px;background:#fff"></div>
<!-- splitter triangles -->
<svg class="a" style="left:809px;top:540px" width="8" height="60"><path d="M3 12l3 2.5-3 2.5z" fill="#5a5850"/><path d="M3 43l3 2.5-3 2.5z" fill="#5a5850"/>
<g fill="#7a7870"><path d="M3 20l3 1.5-3 1.5z"/><path d="M3 24l3 1.5-3 1.5z"/><path d="M3 28l3 1.5-3 1.5z"/><path d="M3 32l3 1.5-3 1.5z"/><path d="M3 36l3 1.5-3 1.5z"/></g></svg>
<!-- deck -->
<div class="a" style="left:820px;top:118px;width:200px;height:904px;border:1px solid #e0ddcb;border-right-color:#d8d5c3;border-bottom-color:#d8d5c3;background:#ece9d8"></div>
<div class="t" style="left:831px;top:128px;font-weight:bold;font-size:11.5px">Eigenschaften</div>
<svg class="a" style="left:1004px;top:124px" width="12" height="12"><path d="M2 2l8 8M10 2l-8 8" stroke="#4a5260" stroke-width="1.8"/></svg>
<!-- tab bar -->
<svg class="a" style="left:1020px;top:118px" width="38" height="210">
<g fill="#1c2a3c"><rect x="16" y="12" width="7" height="1"/><rect x="16" y="14" width="7" height="1"/><rect x="16" y="16" width="7" height="1"/></g><path d="M20 18h6l-3 3z" fill="#1c2a3c"/>
<rect x="9" y="35" width="23" height="1" fill="#d0ccbc"/>
<rect x="4.5" y="39.5" width="31" height="31" rx="4" fill="#ece9d8" stroke="#d0ccbc"/>
<!-- cube -->
<ellipse cx="20" cy="66" rx="10" ry="2" fill="#c8c4b4"/>
<path d="M19.5 44L29 49L19.5 54.5L10 49z" fill="#38b8f8"/><path d="M24.25 46.5L29 49L19.5 54.5L14.75 51.75z" fill="#98e848"/>
<path d="M10 49L19.5 54.5V65L10 60z" fill="#1a98e8"/><path d="M14.75 57.25L19.5 60V65L14.75 62.25z" fill="#70d028"/>
<path d="M29 49V60L19.5 65V54.5z" fill="#80d838"/>
<path d="M14.75 46.5L24.25 51.75M24.25 46.5L14.75 51.75M14.75 51.75V62.25M10 54.5L19.5 60L29 54.5M24.25 51.75V62.5" stroke="#fff" stroke-width="0.9" fill="none"/>
<!-- stars/gallery -->
<ellipse cx="20" cy="100" rx="10" ry="2" fill="#c8c4b4"/>
<path d="M16 84q5-3 9 2q3 5-1 9l-5 2z" fill="#0a2850"/><path d="M12 96l6-12 7 9z" fill="#2a90e8"/><path d="M10.5 87q1-4 6-3l-1 3q-3-1-3 1z" fill="#d06010"/><path d="M20 94q5-3 8 0q-1 4-6 4z" fill="#50b030"/>
<path d="M21 78.5l1 2 2 .3-1.5 1.5.4 2-1.9-1-1.9 1 .4-2-1.5-1.5 2-.3z" fill="#c050e0"/>
<path d="M29 78l1.3 2.6 2.8.4-2 2 .5 2.8-2.6-1.4-2.6 1.4.5-2.8-2-2 2.8-.4z" fill="#f8d040" stroke="#d0a010" stroke-width="0.4"/>
<path d="M12 84l1 2 2 .3-1.5 1.5.4 2-1.9-1-1.9 1 .4-2-1.5-1.5 2-.3z" fill="#f060a0"/>
<path d="M30 87.5l1 2 2 .3-1.5 1.5.4 2-1.9-1-1.9 1 .4-2-1.5-1.5 2-.3z" fill="#f04070"/>
<!-- picture -->
<ellipse cx="21" cy="136" rx="10" ry="2" fill="#c8c4b4"/>
<path d="M8 123l17-7 6 12-17 7z" fill="#fff" stroke="#98a0a8" stroke-width="0.8"/><path d="M11.5 123.5l12-5 4 8.5-12 5z" fill="#7ab8e8"/><path d="M14 128.5l3-3.5 3 2 v3z" fill="#2a5aa0"/><path d="M16 131.5l11-4.5 .8 1.7-11 4.5z" fill="#50a828"/><path d="M20 127l5-2 .6 1.5-5 2z" fill="#a05a20"/><path d="M10 122l4-1.6" stroke="#60c030" stroke-width="1.5"/>
<!-- compass -->
<ellipse cx="20" cy="170" rx="10" ry="2" fill="#c8c4b4"/>
<circle cx="20" cy="159" r="9.2" fill="#fff" stroke="#f49a18" stroke-width="2.6"/><path d="M25.5 153.5l-4 7-3-3z" fill="#e03030"/><path d="M14.5 164.5l4-7 3 3z" fill="#3a80d8"/><circle cx="20" cy="159" r="1" fill="#fff"/><text x="17.6" y="155.3" font-size="5.5" font-weight="bold" fill="#333" font-family="Liberation Sans">N</text>
<!-- fx -->
<ellipse cx="20" cy="205" rx="10" ry="2" fill="#c8c4b4"/>
<path d="M14.5 183.5h10l4 4v14h-14z" fill="#e0ecf8" stroke="#3a80d0"/><text x="9" y="200" font-size="15" font-style="italic" font-weight="bold" fill="#1a4070" font-family="Liberation Serif">fx</text>
</svg>

<!-- section: Text -->
<div class="a" style="left:821px;top:145px;width:198px;height:29px;background:linear-gradient(#dfdccb,#ece9d8)"></div>
<div class="minus" style="top:154px;left:826px"></div>
<div class="t" style="left:840px;top:155px;font-weight:bold;font-size:11.5px">Text</div>
<div class="more" style="left:1003px;top:152px"></div>
<div class="combo" style="left:826px;top:174px;width:141px;height:21px"><div class="cbtn"></div></div>
<div class="t" style="left:829px;top:180px">Arial</div>
<div class="combo" style="left:972px;top:174px;width:44px;height:21px"><div class="cbtn"></div></div>
<div class="t" style="left:976px;top:180px">10</div>
<div class="box" style="left:826px;top:201px;width:141px;height:31px"></div>
<div class="box" style="left:972px;top:201px;width:48px;height:31px;border-right:none;border-radius:2px 0 0 2px"></div>
<div class="box" style="left:826px;top:237px;width:54px;height:31px"></div>
<div class="box" style="left:879px;top:237px;width:41px;height:31px"></div>
<div class="box" style="left:929px;top:237px;width:41px;height:31px"></div>
<svg class="a" style="left:820px;top:195px" width="200" height="75">
<text x="14" y="27" font-size="18" font-weight="bold" fill="#1c2a3c" font-family="Liberation Sans">F</text>
<text x="36" y="27" font-size="19.5" font-weight="bold" font-style="italic" fill="#1c2a3c" font-family="Liberation Serif">K</text>
<text x="63" y="25.6" font-size="16" fill="#1c2a3c" font-family="Liberation Sans">U</text><rect x="63.5" y="27" width="11" height="1.2" fill="#1c2a3c"/>
<path d="M85 19h6l-3 3z" fill="#000"/>
<text x="98.5" y="24.5" font-size="7" font-weight="bold" fill="#2a3848" font-family="Liberation Sans">ABC</text><rect x="98" y="21" width="17" height="1.2" fill="#2a3848"/>
<text x="127.5" y="27.5" font-size="17" font-weight="bold" fill="#8a929a" font-family="Liberation Sans">A</text><text x="123.5" y="25.5" font-size="17" font-weight="bold" fill="#4a7aaa" font-family="Liberation Sans">A</text>
<rect x="158" y="13" width="3" height="14" fill="#dde4ec" stroke="#4a5058" stroke-width="0.8"/><text x="160.5" y="27" font-size="14" font-weight="bold" fill="#3a6a9a" stroke="#1a3050" stroke-width="0.6" font-family="Liberation Sans">A</text><path d="M165 17l4.5-4.5 4.5 4.5z" fill="#f08020" stroke="#a04000" stroke-width="0.6"/>
<rect x="184" y="13" width="3" height="14" fill="#dde4ec" stroke="#4a5058" stroke-width="0.8"/><text x="186.5" y="27" font-size="14" font-weight="bold" fill="#3a6a9a" stroke="#1a3050" stroke-width="0.6" font-family="Liberation Sans">A</text><path d="M191 13h9l-4.5 4.5z" fill="#f08020" stroke="#a04000" stroke-width="0.6"/>
<!-- row2 disabled -->
<g fill="none" stroke="#b4b2a8" stroke-width="1">
<path d="M12.5 63L17 51.5 21.5 63M14 59h6"/>
<path d="M37.5 63L42 51.5 46.5 63M39 59h6"/>
<path d="M65 57l2.5-7 2.5 7M71 50l3 7M75 50l2 7 2-7M66 61h12M66 61l2.5-2.5M66 61l2.5 2.5M78 61l-2.5-2.5M78 61l-2.5 2.5"/>
</g>
<g fill="#c8c6bc" stroke="#a8a69c" stroke-width="0.6"><path d="M20.5 56.5l3-7.5 3 7.5z"/><path d="M21.5 63l2.5-3 2.5 3z"/><path d="M45.5 63l3-7.5 3 7.5z"/><path d="M45.5 49.5h6l-3 3z"/></g>
<path d="M88 55h6l-3 3z" fill="#b4b2a8"/>
<text x="114" y="59" font-size="14" font-weight="bold" fill="#3a6a9a" stroke="#1a3050" stroke-width="0.6" font-family="Liberation Sans">A</text><rect x="114" y="61" width="16" height="4" fill="#f00000"/>
<path d="M138 55h6l-3 3z" fill="#000"/>
</svg>

<!-- section: Ausrichtung -->
<div class="a" style="left:821px;top:266px;width:198px;height:29px;background:linear-gradient(#dfdccb,#ece9d8)"></div>
<div class="minus" style="top:275px;left:826px"></div>
<div class="t" style="left:840px;top:276px;font-weight:bold;font-size:11.5px">Ausrichtung</div>
<div class="more" style="left:1003px;top:273px"></div>
<div class="box" style="left:824px;top:294px;width:104px;height:30px"></div>
<div class="box" style="left:929px;top:294px;width:79px;height:30px"></div>
<svg class="a" style="left:820px;top:290px" width="200" height="30">
<g fill="#3a64a8">
<rect x="11" y="10" width="14" height="1.3"/><rect x="11" y="13" width="10" height="1.3"/><rect x="11" y="16" width="14" height="1.3"/><rect x="11" y="19" width="10" height="1.3"/><rect x="11" y="22" width="14" height="1.3"/>
<rect x="36" y="10" width="14" height="1.3"/><rect x="38" y="13" width="10" height="1.3"/><rect x="36" y="16" width="14" height="1.3"/><rect x="38" y="19" width="10" height="1.3"/><rect x="36" y="22" width="14" height="1.3"/>
<rect x="61" y="10" width="14" height="1.3"/><rect x="65" y="13" width="10" height="1.3"/><rect x="61" y="16" width="14" height="1.3"/><rect x="65" y="19" width="10" height="1.3"/><rect x="61" y="22" width="14" height="1.3"/>
<rect x="86" y="10" width="14" height="1.3"/><rect x="86" y="13" width="14" height="1.3"/><rect x="86" y="16" width="14" height="1.3"/><rect x="86" y="19" width="14" height="1.3"/><rect x="86" y="22" width="14" height="1.3"/>
<rect x="116" y="9" width="14" height="1.3"/><rect x="116" y="12" width="10" height="1.3"/>
<rect x="141" y="15" width="14" height="1.3"/><rect x="141" y="18" width="10" height="1.3"/>
<rect x="166" y="20" width="14" height="1.3"/><rect x="166" y="23" width="10" height="1.3"/>
</g></svg>
<div class="t" style="left:826px;top:332px;color:#9c9a90"><u>L</u>inker Einzug</div>
<div class="a" style="left:826px;top:345px;width:80px;height:20px;background:#fff;border:1px solid #7f9db9"></div>
<div class="t" style="left:829px;top:350px;color:#9c9a90">0pt</div>
<div class="a" style="left:888px;top:348px;width:15px;height:14px;background:#e9e8e0;border-radius:2px"></div>
<svg class="a" style="left:888px;top:348px" width="15" height="14"><path d="M4 6l3.5-3 3.5 3M4 8l3.5 3 3.5-3" stroke="#b8b6ac" fill="none" stroke-width="1.2"/></svg>
<div class="chk" style="left:920px;top:332px"></div>
<div class="t" style="left:937px;top:334px">Zeilenum<u>b</u>ruch</div>
<div class="a" style="left:920px;top:355px;width:13px;height:13px;border:1px solid #cac8bb;background:#fff"></div>
<div class="t" style="left:937px;top:357px;color:#9c9a90">Z<u>e</u>llen verbinden</div>
<div class="t" style="left:826px;top:375px"><u>T</u>extausrichtung</div>
<svg class="a" style="left:820px;top:386px" width="60" height="60"><circle cx="30.5" cy="30.5" r="24" fill="none" stroke="#5d7aa0" stroke-width="1.1"/><rect x="29" y="29" width="3" height="3" fill="#3d5a80"/><path d="M31 30.5h23" stroke="#3d5a80" stroke-width="1.2"/></svg>
<div class="combo" style="left:885px;top:397px;width:115px;height:21px"><div class="cbtn"></div></div>
<div class="t" style="left:889px;top:403px">0 Grad</div>
<div class="chk" style="left:885px;top:428px"></div>
<div class="t" style="left:902px;top:430px"><u>S</u>enkrecht gestapelt</div>

<!-- section: Erscheinungsbild -->
<div class="a" style="left:821px;top:446px;width:198px;height:29px;background:linear-gradient(#dfdccb,#ece9d8)"></div>
<div class="minus" style="top:455px;left:826px"></div>
<div class="t" style="left:840px;top:456px;font-weight:bold;font-size:11.5px">Erscheinungsbild der Zelle</div>
<div class="more" style="left:1003px;top:453px"></div>
<div class="t" style="left:826px;top:477px">Zell<u>h</u>intergrund:</div>
<div class="box" style="left:824px;top:489px;width:101px;height:28px"></div>
<svg class="a" style="left:830px;top:492px" width="20" height="20"><path d="M3.5 9.5l5-5 6 5.5-5 5z" fill="#b0d0f4" stroke="#2a58a8"/><path d="M6 5.5q2-3 5-1.5" stroke="#2a58a8" fill="none"/><path d="M8.5 4.5v4" stroke="#2a58a8"/><path d="M13 5q4 2 2 8" stroke="#111" fill="none" stroke-width="1.5"/></svg>
<div class="a" style="left:849px;top:496px;width:56px;height:12px;border:1px solid #3a64a8;background:#f5f3e8;box-shadow:inset 0 0 0 1px #fff,inset 0 0 0 2px #000"></div>
<svg class="a" style="left:910px;top:500px" width="10" height="6"><path d="M2 1h6l-3 3z" fill="#000"/></svg>
<div class="t" style="left:826px;top:524px">Zell<u>u</u>mrandung:</div>
<div class="box" style="left:824px;top:539px;width:67px;height:57px"></div>
<div class="box" style="left:891px;top:539px;width:100px;height:26px"></div>
<div class="box" style="left:891px;top:567px;width:100px;height:28px"></div>
<svg class="a" style="left:824px;top:539px" width="170" height="60">
<g stroke="#3a5a98" stroke-width="1.2" stroke-dasharray="1.2 2.8" fill="none"><path d="M7.5 7.5h41v41h-41z"/><path d="M28 7.5v41M7.5 28h41"/></g>
<path d="M55 26h6l-3 3z" fill="#000"/>
<path d="M73 12.5h74" stroke="#b8b6ac"/><path d="M153 11h6l-3 3z" fill="#b8b6ac"/>
<path d="M73 45l8-8 3 2-8 8z" fill="none" stroke="#b8b6ac"/><path d="M74 48h11" stroke="#b8b6ac" stroke-width="1.5"/>
<rect x="91.5" y="35.5" width="55" height="11" fill="#ebe9dd" stroke="#b8b6ac"/><path d="M153 40h6l-3 3z" fill="#b8b6ac"/>
</svg>
<div class="chk" style="left:826px;top:600px;background:linear-gradient(135deg,#e8e8e2,#fff)"></div>
<svg class="a" style="left:826px;top:600px" width="13" height="13"><path d="M3 6l2.5 3 5-6" stroke="#21a121" stroke-width="2" fill="none"/></svg>
<div class="t" style="left:843px;top:602px"><u>G</u>itternetzlinien anzeigen</div>

<!-- section: Zahlenformat -->
<div class="a" style="left:821px;top:621px;width:198px;height:27px;background:linear-gradient(#dfdccb,#ece9d8)"></div>
<div class="a" style="left:821px;top:648px;width:198px;height:1px;background:#e0ddcb"></div>
<div class="minus plus" style="top:630px;left:826px"></div>
<div class="t" style="left:840px;top:631px;font-weight:bold;font-size:11.5px">Zahlenformat</div>
<div class="more" style="left:1003px;top:628px"></div>


<div id="bord"></div><div class="a" style="left:1062px;top:3px;width:2px;height:24px;background:linear-gradient(90deg,#0040c8,#0028a0)"></div><svg class="a" style="left:1059px;top:0" width="6" height="6"><path d="M0 0H6V6A6 6 0 0 0 0 0z" fill="#9cc0f0"/></svg>
</div>
<div class="a" style="left:1064px;top:0;width:1px;height:1048px;background:linear-gradient(#9cc0f0 0,#9cc0f0 10px,#efead6 12px,#efead6 101px,#fff 102px)"></div>
<div class="a" style="left:1064px;top:97px;width:1px;height:1px;background:#5a5850"></div>
<div class="a" style="left:1064px;top:101px;width:1px;height:1px;background:#5a5850"></div>
<div class="a" style="left:1064px;top:772px;width:1px;height:1px;background:#000"></div>
<div class="a" style="left:1064px;top:801px;width:1px;height:1px;background:#777"></div>
<div class="a" style="left:1064px;top:816px;width:1px;height:1px;background:#777"></div>
<div class="a" style="left:1064px;top:994px;width:1px;height:1px;background:#000"></div>
<div class="a" style="left:1064px;top:1039px;width:1px;height:1px;background:#7a9ad0"></div>
</body></html>
